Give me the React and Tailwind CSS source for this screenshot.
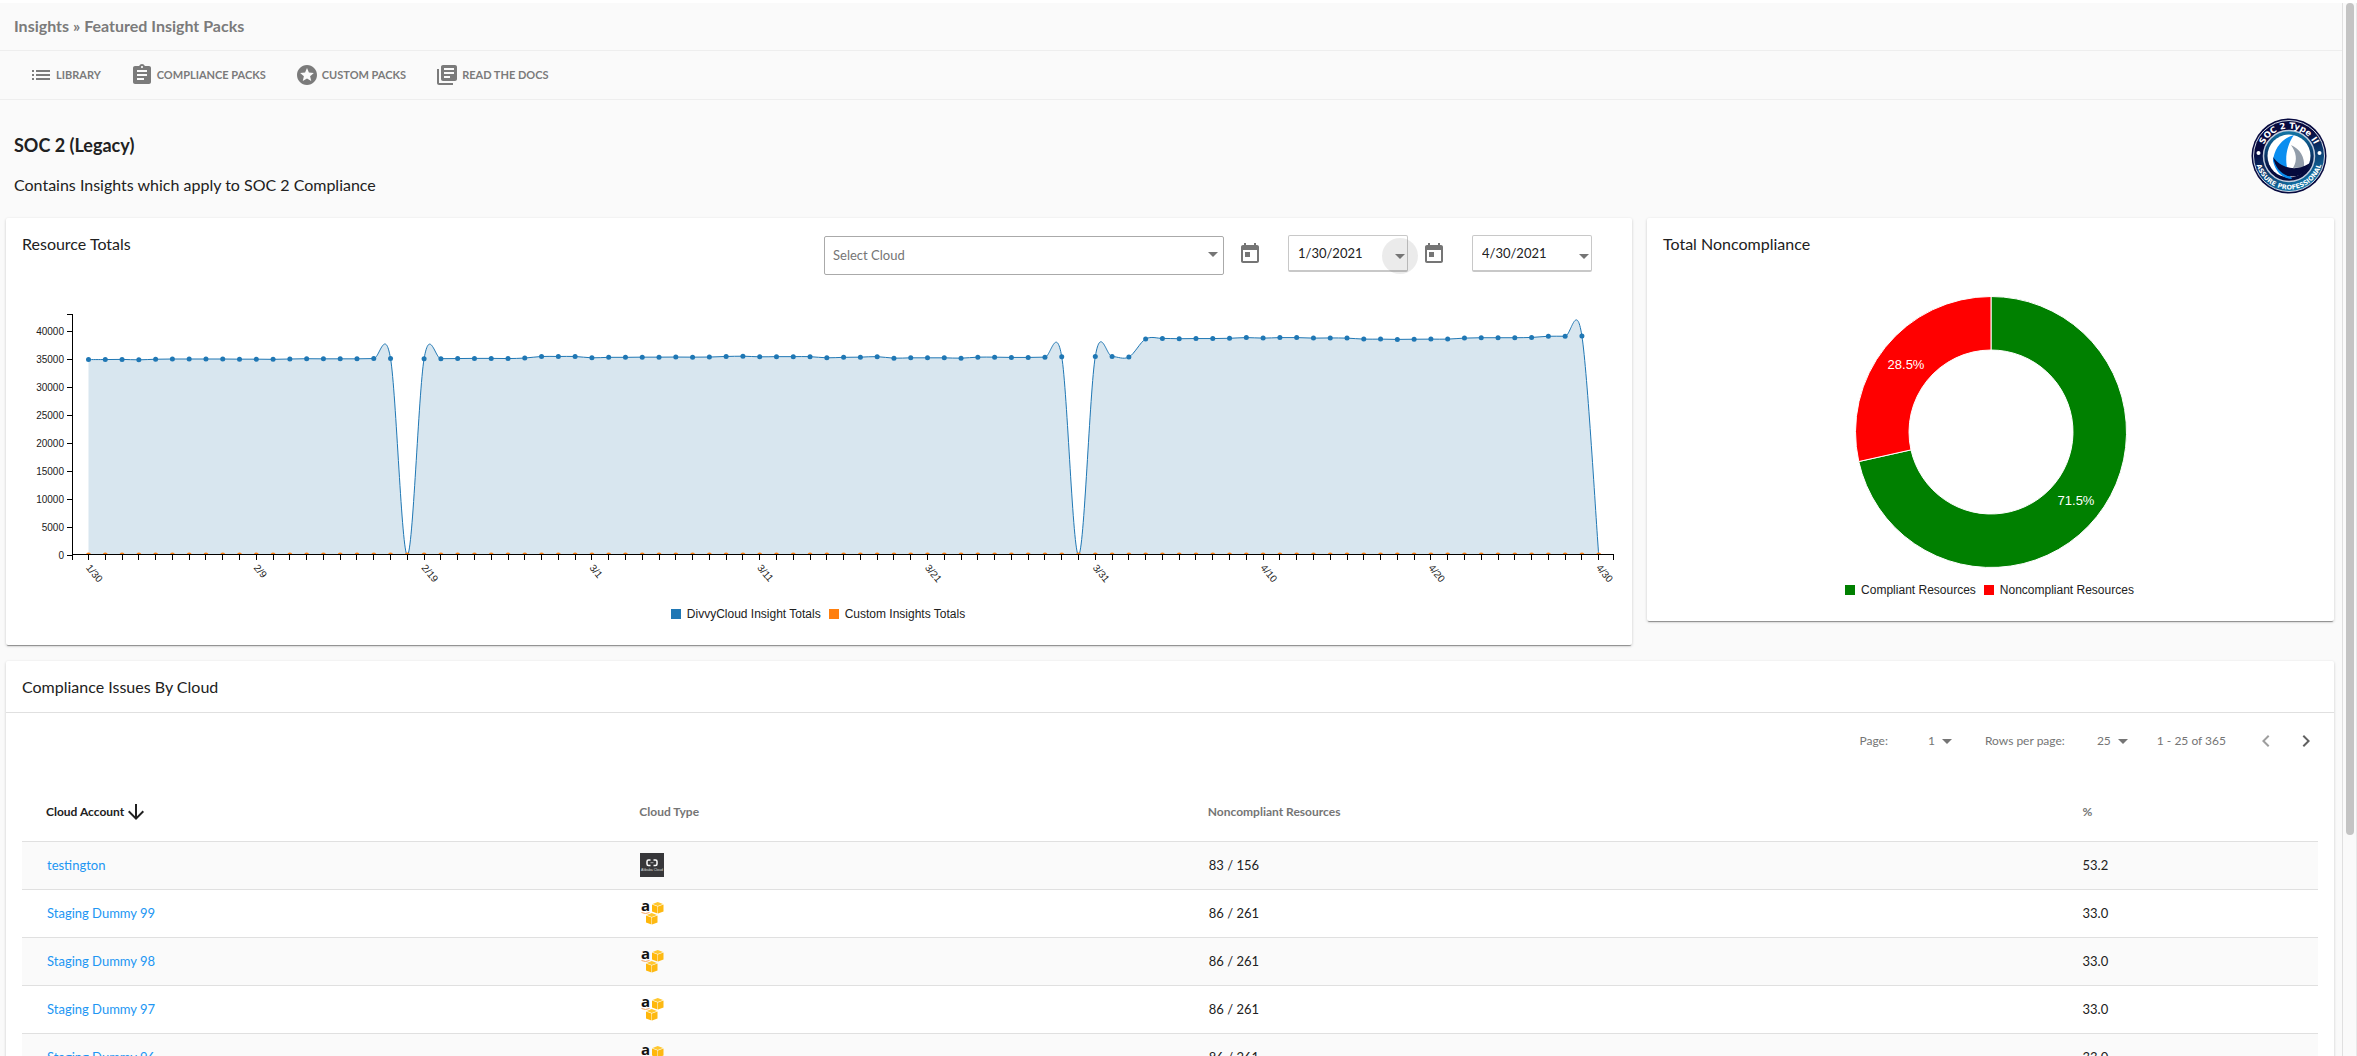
import { MdList, MdStars, MdArrowDropDown, MdChevronLeft, MdChevronRight, MdArrowDownward } from 'react-icons/md';

const ZERO_DAYS = [19, 59, 90];

const TOTALS = [
    34900, 34900, 34930, 34850, 34960, 35000, 35000, 35000, 35000, 34970,
    34970, 34940, 35000, 35050, 35030, 35030, 35030, 35080, 35080, 0,
    35060, 35060, 35080, 35110, 35110, 35080, 35170, 35450, 35450, 35450,
    35210, 35300, 35300, 35330, 35330, 35350, 35330, 35350, 35450, 35500,
    35390, 35420, 35420, 35420, 35210, 35300, 35330, 35420, 35150, 35210,
    35210, 35210, 35150, 35330, 35330, 35280, 35280, 35330, 35400, 0,
    35450, 35450, 35350, 38570, 38680, 38620, 38650, 38650, 38700, 38820,
    38730, 38820, 38820, 38730, 38760, 38730, 38550, 38550, 38500, 38530,
    38550, 38550, 38730, 38800, 38800, 38800, 38850, 39060, 39060, 39100,
    0,
];

const X_LABELS = ['1/30', '2/9', '2/19', '3/1', '3/11', '3/21', '3/31', '4/10', '4/20', '4/30'];

function Glyph({ d }) {
    return (
        <svg viewBox="0 0 24 24" fill="currentColor" className="size-6" aria-hidden="true">
            <path d={d} />
        </svg>
    );
}

const ClipboardIcon = () => (
    <Glyph d="M19 3h-4.18C14.4 1.84 13.3 1 12 1c-1.3 0-2.4.84-2.82 2H5c-1.1 0-2 .9-2 2v14c0 1.1.9 2 2 2h14c1.1 0 2-.9 2-2V5c0-1.1-.9-2-2-2zm-7 0c.55 0 1 .45 1 1s-.45 1-1 1-1-.45-1-1 .45-1 1-1zm2 14H7v-2h7v2zm3-4H7v-2h10v2zm0-4H7V7h10v2z" />
);

const BooksIcon = () => (
    <Glyph d="M4 6H2v14c0 1.1.9 2 2 2h14v-2H4V6zm16-4H8c-1.1 0-2 .9-2 2v12c0 1.1.9 2 2 2h12c1.1 0 2-.9 2-2V4c0-1.1-.9-2-2-2zm-1 9H9V9h10v2zm-4 4H9v-2h6v2zm4-8H9V5h10v2z" />
);

const CalendarIcon = () => (
    <Glyph d="M19 3h-1V1h-2v2H8V1H6v2H5c-1.11 0-1.99.9-1.99 2L3 19c0 1.1.89 2 2 2h14c1.1 0 2-.9 2-2V5c0-1.1-.9-2-2-2zm0 16H5V8h14v11zM7 10h5v5H7z" />
);

const ListIcon = () => <MdList className="size-6" />;
const StarsIcon = () => <MdStars className="size-6" />;

const NAV = [
    { label: 'LIBRARY', icon: ListIcon },
    { label: 'COMPLIANCE PACKS', icon: ClipboardIcon },
    { label: 'CUSTOM PACKS', icon: StarsIcon },
    { label: 'READ THE DOCS', icon: BooksIcon },
];

const ROWS = [
    { name: 'testington', type: 'alibaba', resources: '83 / 156', percent: '53.2' },
    { name: 'Staging Dummy 99', type: 'aws', resources: '86 / 261', percent: '33.0' },
    { name: 'Staging Dummy 98', type: 'aws', resources: '86 / 261', percent: '33.0' },
    { name: 'Staging Dummy 97', type: 'aws', resources: '86 / 261', percent: '33.0' },
    { name: 'Staging Dummy 96', type: 'aws', resources: '86 / 261', percent: '33.0' },
];

const px = (i) => 82.5 + i * 16.78;
const py = (v) => 255 - v * 0.0056;

// cardinal spline, tension 0
const splinePath = (values) => {
    const pts = values.map((v, i) => [px(i), py(v)]);
    let d = `M${pts[0][0]},${pts[0][1]}`;
    for (let i = 0; i < pts.length - 1; i++) {
        const p0 = pts[i - 1] || pts[i];
        const p1 = pts[i];
        const p2 = pts[i + 1];
        const p3 = pts[i + 2] || p2;
        d += `C${p1[0] + (p2[0] - p0[0]) / 6},${p1[1] + (p2[1] - p0[1]) / 6} ${p2[0] - (p3[0] - p1[0]) / 6},${p2[1] - (p3[1] - p1[1]) / 6} ${p2[0]},${p2[1]}`;
    }
    return d;
};

function TotalsChart() {
    const line = splinePath(TOTALS);
    const yTicks = [0, 5000, 10000, 15000, 20000, 25000, 30000, 35000, 40000];

    return (
        <svg viewBox="0 0 1626 330" className="block w-full font-['Liberation_Sans',sans-serif]" role="img" aria-label="Resource totals">
            <clipPath id="plot">
                <rect x="66" y="0" width="1550" height="255" />
            </clipPath>
            <g clipPath="url(#plot)">
                <path d={`${line}L${px(90)},255L${px(0)},255Z`} fill="#d8e6ef" />
                <path d={line} fill="none" stroke="#1f77b4" />
                {TOTALS.map((v, i) => (
                    <g key={i}>
                        {!ZERO_DAYS.includes(i) && <circle cx={px(i)} cy={py(v)} r="2.5" fill="#1f77b4" />}
                        <circle cx={px(i)} cy="255" r="2.5" fill="#ff7f0e" />
                    </g>
                ))}
            </g>
            <g stroke="#000" fill="none" shapeRendering="crispEdges">
                <path d="M61,14.5H66.5V255.5H61" />
                <path d="M66.5,260V254.5H1607.5V260" />
                {yTicks.map((v) => (
                    <path key={v} d={`M61,${py(v)}H66.5`} />
                ))}
                {TOTALS.map((v, i) => (
                    <path key={i} d={`M${px(i)},255V260`} />
                ))}
            </g>
            {yTicks.map((v) => (
                <text key={v} x="58" y={py(v) + 4} textAnchor="end" fontSize="10" fill="#212121">{v}</text>
            ))}
            {X_LABELS.map((label, i) => (
                <text key={label} transform={`translate(${px(i * 10) - 3},268) rotate(50)`} fontSize="10" fill="#212121">{label}</text>
            ))}
        </svg>
    );
}

function Donut() {
    // 28.5% of the ring, counted back from the top
    const angle = 0.715 * 2 * Math.PI;
    const at = (r) => `${136 + r * Math.sin(angle)},${136 - r * Math.cos(angle)}`;

    return (
        <svg width="272" height="272" viewBox="0 0 272 272" className="font-['Liberation_Sans',sans-serif]" role="img" aria-label="Total noncompliance">
            <g stroke="#fff">
                <path d={`M136,0.5A135.5,135.5 0 1 1 ${at(135.5)}L${at(82)}A82,82 0 1 0 136,54Z`} fill="#008000" />
                <path d={`M136,0.5A135.5,135.5 0 0 0 ${at(135.5)}L${at(82)}A82,82 0 0 1 136,54Z`} fill="#f00" />
            </g>
            <text x="51" y="73" textAnchor="middle" fontSize="13" fill="#fff">28.5%</text>
            <text x="221" y="209" textAnchor="middle" fontSize="13" fill="#fff">71.5%</text>
        </svg>
    );
}

function Legend({ items }) {
    return (
        <ul className="flex justify-center gap-2 pr-[2px] font-['Liberation_Sans',sans-serif] text-xs leading-4 text-[#212121]">
            {items.map((item) => (
                <li key={item.label} className="flex items-center gap-[6px]">
                    <span className={`size-[10px] ${item.color}`} />
                    {item.label}
                </li>
            ))}
        </ul>
    );
}

function Badge() {
    return (
        <svg width="76" height="76" viewBox="0 0 76 76" role="img" aria-label="SOC 2 Type II Assure Professional">
            <defs>
                <linearGradient id="ring" x1="0.3" y1="0" x2="0.7" y2="1">
                    <stop offset="0.3" stopColor="#06093f" />
                    <stop offset="1" stopColor="#1483b4" />
                </linearGradient>
                <linearGradient id="inner" x1="0" y1="0" x2="0" y2="1">
                    <stop offset="0" stopColor="#1378a8" />
                    <stop offset="0.8" stopColor="#050a3c" />
                </linearGradient>
                <path id="topArc" d="M10.5,38A27.5,27.5 0 0 1 65.5,38" />
                <path id="bottomArc" d="M4.5,38A33.5,33.5 0 0 0 71.5,38" />
            </defs>
            <circle cx="38" cy="38" r="37.5" fill="#06093f" />
            <circle cx="38" cy="38" r="35.5" fill="url(#ring)" stroke="#d5dbe6" strokeWidth="1" />
            <circle cx="38" cy="38" r="25.5" fill="url(#inner)" stroke="#c3cddd" strokeWidth="1.5" />
            <circle cx="38" cy="38" r="21.5" fill="#fff" />
            <path d="M43,17C31,20 23,31 22,43C25,56 34,61 41,61C33,50 33,31 43,17Z" fill="#0b8ef0" />
            <path d="M40,27C49,31 54,39 53,49L42,50C47,42 45,34 40,27Z" fill="#929daa" />
            <path d="M22,39C29,49 44,55 59,45C55,56 46,60 37,58C29,55 24,49 22,39Z" fill="#050a3c" />
            <circle cx="7.5" cy="35" r="2" fill="#fff" />
            <circle cx="68.5" cy="35" r="2" fill="#fff" />
            <g fill="#fff" fontWeight="bold" textAnchor="middle" className="font-['DejaVu_Sans',sans-serif]">
                <text fontSize="8.5"><textPath href="#topArc" startOffset="50%">SOC 2 Type II</textPath></text>
                <text fontSize="6.5"><textPath href="#bottomArc" startOffset="50%">ASSURE PROFESSIONAL</textPath></text>
            </g>
        </svg>
    );
}

function Cube({ x, y }) {
    return (
        <g transform={`translate(${x},${y})`}>
            <path d="M0.5,2L5.75,0L11,2L5.75,4Z" fill="#ffc72e" />
            <path d="M0,2.5L5.5,4.5V11.5L0,9.5Z" fill="#ffb70a" />
            <path d="M11.5,2.5L6,4.5V11.5L11.5,9.5Z" fill="#fdb913" />
        </g>
    );
}

function CloudIcon({ type }) {
    if (type === 'alibaba') {
        return (
            <svg width="24" height="24" viewBox="0 0 24 24" role="img" aria-label="Alibaba Cloud">
                <rect width="24" height="24" fill="#37373a" />
                <path d="M10.5,7H8.5Q7,7 7,8.5V11Q7,12.5 8.5,12.5H10.5M13.5,7H15.5Q17,7 17,8.5V11Q17,12.5 15.5,12.5H13.5" fill="none" stroke="#fff" strokeWidth="1.5" />
                <path d="M10.5,9.7H13.5" stroke="#aaa" />
                <text x="12" y="17.5" textAnchor="middle" fontSize="3.5" fill="#ddd" className="font-['Liberation_Sans',sans-serif]">Alibaba Cloud</text>
            </svg>
        );
    }
    return (
        <svg width="24" height="24" viewBox="0 0 24 24" className="overflow-visible" role="img" aria-label="Amazon Web Services">
            <text x="1" y="10" fontSize="15" fontWeight="bold" fill="#111" className="font-['Open_Sans',sans-serif]">a</text>
            <path d="M1.5,11.5Q5.5,13.5 9.5,11.5" fill="none" stroke="#f7a35c" />
            <Cube x={12} y={1} />
            <Cube x={6} y={12} />
        </svg>
    );
}

function DateField({ label, value, active }) {
    return (
        <div className="flex items-start gap-[26px]">
            <div className="mt-[7px] text-[#757575]"><CalendarIcon /></div>
            <div className="relative">
                <input
                    aria-label={label}
                    defaultValue={value}
                    className="block h-[37px] w-[120px] rounded-[2px] border border-b-2 border-[#c8c8c8] bg-white pl-[9px] text-[13px] text-[#212121] outline-none"
                />
                <button
                    aria-label={`Open ${label}`}
                    className={`absolute -right-[10px] top-[3px] flex size-9 items-center justify-center rounded-full text-[#757575] ${active ? 'bg-black/8' : ''}`}
                >
                    <MdArrowDropDown className="size-6" />
                </button>
            </div>
        </div>
    );
}

function PageSelect({ id, value }) {
    return (
        <span className="relative flex items-center">
            <select id={id} defaultValue={value} className="h-6 appearance-none bg-transparent pr-5 text-right outline-none">
                <option>{value}</option>
            </select>
            <MdArrowDropDown className="pointer-events-none absolute -right-1 size-6" />
        </span>
    );
}

const CARD = 'rounded-[2px] bg-white shadow-[0_1px_3px_rgba(0,0,0,0.2),0_2px_1px_-1px_rgba(0,0,0,0.35)]';

export default function App() {
    return (
        <div className="flex h-screen overflow-hidden border-t-[3px] border-white bg-[#fafafa] font-['Lato',sans-serif] text-[#212121]">
            <div className="h-full min-w-0 flex-1 overflow-hidden border-r border-[#e0e0e0]">
                <header className="flex h-12 items-center border-b border-[#eee] px-[14px] pb-[2px] text-base font-bold text-[#7b7b7b]">
                    Insights » Featured Insight Packs
                </header>
                <nav className="flex h-[49px] items-center gap-[29px] border-b border-[#eee] px-[29px] text-[11px] font-bold text-[#7b7b7b]">
                    {NAV.map(({ label, icon: Icon }) => (
                        <a key={label} href="#" className="flex items-center gap-[3px]">
                            <Icon />
                            {label}
                        </a>
                    ))}
                </nav>

                <div className="flex h-[118px] items-start justify-between pl-[14px] pr-[15px] pt-[18px]">
                    <div className="pt-[13px]">
                        <h1 className="text-lg font-bold leading-7">SOC 2 (Legacy)</h1>
                        <p className="mt-[14px] text-base leading-6">Contains Insights which apply to SOC 2 Compliance</p>
                    </div>
                    <Badge />
                </div>

                <div className="flex items-start gap-[15px] pl-[6px] pr-2">
                    <section className={`min-w-0 flex-[1626] ${CARD}`}>
                        <div className="flex h-[82px] items-start justify-between pl-4 pr-10 pt-4">
                            <h2 className="text-base leading-5">Resource Totals</h2>
                            <div className="flex items-start gap-[14px] pt-px">
                                <div className="relative">
                                    <select
                                        aria-label="Select Cloud"
                                        className="mt-px block h-[39px] w-[400px] appearance-none rounded-[2px] border border-[#aaa] bg-white pl-2 text-[13px] text-[#757575] outline-none"
                                    >
                                        <option>Select Cloud</option>
                                    </select>
                                    <MdArrowDropDown className="pointer-events-none absolute -right-px top-[7px] size-6 text-[#757575]" />
                                </div>
                                <DateField label="start date" value="1/30/2021" active />
                                <DateField label="end date" value="4/30/2021" />
                            </div>
                        </div>
                        <TotalsChart />
                        <div className="-mt-6 pb-[23px]">
                            <Legend items={[
                                { label: 'DivvyCloud Insight Totals', color: 'bg-[#1f77b4]' },
                                { label: 'Custom Insights Totals', color: 'bg-[#ff7f0e]' },
                            ]} />
                        </div>
                    </section>

                    <section className={`min-w-0 flex-[687] ${CARD}`}>
                        <h2 className="h-[78px] pl-4 pt-4 text-base leading-5">Total Noncompliance</h2>
                        <div className="flex justify-center"><Donut /></div>
                        <div className="pb-[23px] pt-[14px]">
                            <Legend items={[
                                { label: 'Compliant Resources', color: 'bg-[#008000]' },
                                { label: 'Noncompliant Resources', color: 'bg-[#f00]' },
                            ]} />
                        </div>
                    </section>
                </div>

                <section className={`ml-[6px] mr-2 mt-4 ${CARD}`}>
                    <h2 className="flex h-[52px] items-center border-b border-[#e0e0e0] px-4 text-base">Compliance Issues By Cloud</h2>
                    <div className="flex h-14 items-center justify-end pr-4 text-xs text-[#757575]">
                        <label htmlFor="page" className="mr-10">Page:</label>
                        <PageSelect id="page" value="1" />
                        <label htmlFor="rows" className="ml-[30px] mr-8">Rows per page:</label>
                        <PageSelect id="rows" value="25" />
                        <span className="ml-[26px] mr-7">1 - 25 of 365</span>
                        <button aria-label="Previous page" className="mr-4 text-[#9e9e9e]"><MdChevronLeft className="size-6" /></button>
                        <button aria-label="Next page" className="text-[#616161]"><MdChevronRight className="size-6" /></button>
                    </div>
                    <div className="px-4 pt-4">
                        <table className="w-full table-fixed text-left text-[13px]">
                            <thead>
                                <tr className="h-14 text-xs text-[#757575]">
                                    <th className="w-[25.8%] pb-[2px] pl-6 text-[#212121]">
                                        <button className="flex items-center font-bold">
                                            Cloud Account <MdArrowDownward className="size-6" />
                                        </button>
                                    </th>
                                    <th className="w-[24.8%] pb-[2px] pl-[25px]">Cloud Type</th>
                                    <th className="w-[38.1%] pb-[2px] pl-6">Noncompliant Resources</th>
                                    <th className="pb-[2px] pl-6">%</th>
                                </tr>
                            </thead>
                            <tbody>
                                {ROWS.map((row) => (
                                    <tr key={row.name} className="h-12 border-t border-[#e0e0e0] odd:bg-[#fafafa]">
                                        <td className="pl-[25px] pt-px"><a href="#" className="text-[#2196f3]">{row.name}</a></td>
                                        <td className="pl-[26px]"><CloudIcon type={row.type} /></td>
                                        <td className="pl-[25px] pt-px">{row.resources}</td>
                                        <td className="pl-6 pt-px">{row.percent}</td>
                                    </tr>
                                ))}
                            </tbody>
                        </table>
                    </div>
                </section>
            </div>
            <div className="w-[14px] border-r border-[#e8e8e8] pl-[3px]">
                <div className="h-[79%] w-2 rounded-full bg-[#c4c4c4]" />
            </div>
        </div>
    );
}
